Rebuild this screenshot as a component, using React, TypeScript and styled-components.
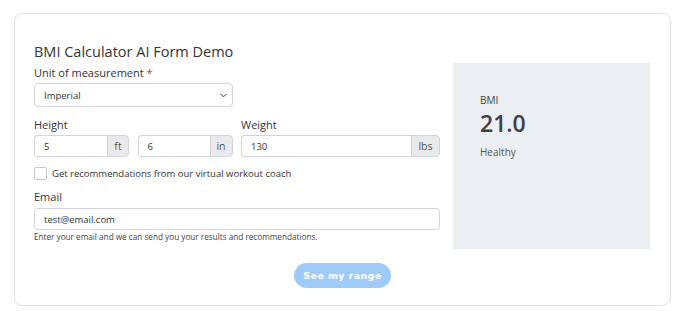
import React from 'react';
import styled, { createGlobalStyle } from 'styled-components';

const GlobalStyle = createGlobalStyle`
  * { box-sizing: border-box; }
  body {
    margin: 0;
    background: #ffffff;
    font-family: "Open Sans", "DejaVu Sans", sans-serif;
    color: #333333;
  }
`;

const Page = styled.div`
  width: 680px;
  height: 320px;
  padding: 13px 10px 0 14px;
`;

const Card = styled.div`
  width: 657px;
  height: 293px;
  border: 1px solid #e2e2e6;
  border-radius: 8px;
  padding: 28px 19px 0 19px;
  display: flex;
  flex-direction: column;
`;

const Body = styled.div`
  display: grid;
  grid-template-columns: 406px 197px;
  column-gap: 13px;
`;

const Column = styled.div`
  display: flex;
  flex-direction: column;
`;

const Title = styled.h1`
  margin: 0 0 3px;
  font-size: 14.5px;
  font-weight: 400;
  line-height: 20px;
  color: #333;
`;

const Label = styled.label<{ $top?: number }>`
  display: block;
  font-size: 11px;
  line-height: 16px;
  color: #333;
  margin-top: ${(p) => p.$top ?? 0}px;
  margin-bottom: 2px;
`;

const Required = styled.span`
  color: #c0392b;
`;

const Select = styled.div`
  width: 199px;
  height: 24px;
  border: 1px solid #d4d4d8;
  border-radius: 4px;
  padding: 0 5px 0 9px;
  display: flex;
  align-items: center;
  justify-content: space-between;
  font-size: 9.5px;
  color: #333;
`;

const Row = styled.div`
  display: flex;
  justify-content: space-between;
  margin-top: 10px;
`;

const Field = styled.div<{ $w: number }>`
  width: ${(p) => p.$w}px;
  display: flex;
  flex-direction: column;
`;

const Group = styled.div`
  display: flex;
  height: 22px;
`;

const Input = styled.div`
  flex: 1;
  border: 1px solid #d4d4d8;
  border-right: none;
  border-radius: 4px 0 0 4px;
  padding: 0 9px;
  display: flex;
  align-items: center;
  font-size: 9.5px;
  color: #333;
`;

const Addon = styled.div<{ $w: number }>`
  width: ${(p) => p.$w}px;
  border: 1px solid #d4d4d8;
  border-radius: 0 4px 4px 0;
  background: #eaeaec;
  display: flex;
  align-items: center;
  justify-content: center;
  font-size: 10.5px;
  color: #555;
`;

const CheckRow = styled.label`
  display: flex;
  align-items: center;
  gap: 5px;
  height: 13px;
  margin-top: 10px;
  font-size: 9.5px;
  color: #333;
`;

const Box = styled.span`
  width: 13px;
  height: 13px;
  border: 1px solid #c8c8cc;
  border-radius: 2px;
  background: #fff;
`;

const EmailInput = styled.div`
  height: 22px;
  margin-top: 1px;
  border: 1px solid #d4d4d8;
  border-radius: 4px;
  padding: 0 9px;
  display: flex;
  align-items: center;
  font-size: 9.5px;
  color: #333;
`;

const Help = styled.div`
  margin-top: 1px;
  font-size: 8.2px;
  line-height: 12px;
  color: #444;
`;

const Result = styled.div`
  margin-top: 21px;
  height: 186px;
  background: #ebeef3;
  padding: 30px 27px;
  color: #444;
`;

const ResultLabel = styled.div`
  font-size: 10px;
  line-height: 14px;
`;

const ResultValue = styled.div`
  font-size: 23px;
  font-weight: 600;
  line-height: 28px;
  margin-top: 2px;
  color: #3f3f44;
`;

const ResultStatus = styled.div`
  font-size: 10px;
  margin-top: 8px;
  color: #555;
`;

const Footer = styled.div`
  display: flex;
  justify-content: center;
  margin-top: 14px;
`;

const Button = styled.button`
  width: 97px;
  height: 25px;
  padding: 0;
  border: none;
  border-radius: 13px;
  background: #9fcbfb;
  color: #ffffff;
  white-space: nowrap;
  font-family: "DejaVu Sans", sans-serif;
  font-size: 9.5px;
  font-weight: 700;
  letter-spacing: 0.4px;
`;

const Chevron = () => (
  <svg width="7" height="7" viewBox="0 0 16 16">
    <path d="M2 5l6 6 6-6" fill="none" stroke="#333" strokeWidth="2.2" strokeLinecap="round" strokeLinejoin="round" />
  </svg>
);

const App: React.FC = () => (
  <>
    <GlobalStyle />
    <Page>
      <Card>
        <Body>
          <Column>
            <Title>BMI Calculator AI Form Demo</Title>
            <Label>
              Unit of measurement <Required>*</Required>
            </Label>
            <Select>
              Imperial
              <Chevron />
            </Select>
            <Row>
              <Field $w={95}>
                <Label>Height</Label>
                <Group>
                  <Input>5</Input>
                  <Addon $w={22}>ft</Addon>
                </Group>
              </Field>
              <Field $w={95}>
                <Label>&nbsp;</Label>
                <Group>
                  <Input>6</Input>
                  <Addon $w={23}>in</Addon>
                </Group>
              </Field>
              <Field $w={199}>
                <Label>Weight</Label>
                <Group>
                  <Input>130</Input>
                  <Addon $w={29}>lbs</Addon>
                </Group>
              </Field>
            </Row>
            <CheckRow>
              <Box />
              Get recommendations from our virtual workout coach
            </CheckRow>
            <Label $top={9}>Email</Label>
            <EmailInput>test@email.com</EmailInput>
            <Help>Enter your email and we can send you your results and recommendations.</Help>
          </Column>
          <Result>
            <ResultLabel>BMI</ResultLabel>
            <ResultValue>21.0</ResultValue>
            <ResultStatus>Healthy</ResultStatus>
          </Result>
        </Body>
        <Footer>
          <Button>See my range</Button>
        </Footer>
      </Card>
    </Page>
  </>
);

export default App;
